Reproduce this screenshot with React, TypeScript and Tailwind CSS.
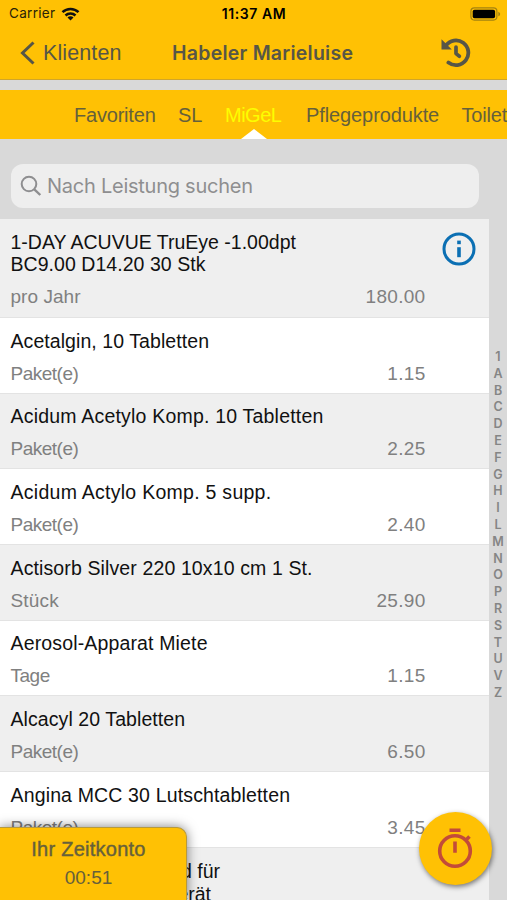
type Item = { lines: { text: string; spacing: string }[]; unit: string; unitSpacing: string; price: string; info?: boolean; height: string };

const items: Item[] = [
  {
    lines: [
      { text: '1-DAY ACUVUE TruEye -1.00dpt', spacing: 'tracking-[0px]' },
      { text: 'BC9.00 D14.20 30 Stk', spacing: 'tracking-[0.05px]' },
    ],
    unit: 'pro Jahr', unitSpacing: 'tracking-[0.05px]', price: '180.00', info: true, height: 'h-[99px]',
  },
  { lines: [{ text: 'Acetalgin, 10 Tabletten', spacing: 'tracking-[0.07px]' }], unit: 'Paket(e)', unitSpacing: 'tracking-[-0.5px]', price: '1.15', height: 'h-[75.7px]' },
  { lines: [{ text: 'Acidum Acetylo Komp. 10 Tabletten', spacing: 'tracking-[0.2px]' }], unit: 'Paket(e)', unitSpacing: 'tracking-[-0.5px]', price: '2.25', height: 'h-[75.7px]' },
  { lines: [{ text: 'Acidum Actylo Komp. 5 supp.', spacing: 'tracking-[0.27px]' }], unit: 'Paket(e)', unitSpacing: 'tracking-[-0.5px]', price: '2.40', height: 'h-[75.7px]' },
  { lines: [{ text: 'Actisorb Silver 220 10x10 cm 1 St.', spacing: 'tracking-[0.12px]' }], unit: 'Stück', unitSpacing: 'tracking-[0.2px]', price: '25.90', height: 'h-[75.7px]' },
  { lines: [{ text: 'Aerosol-Apparat Miete', spacing: 'tracking-[0.15px]' }], unit: 'Tage', unitSpacing: 'tracking-[-0.5px]', price: '1.15', height: 'h-[75.7px]' },
  { lines: [{ text: 'Alcacyl 20 Tabletten', spacing: 'tracking-[0.08px]' }], unit: 'Paket(e)', unitSpacing: 'tracking-[-0.5px]', price: '6.50', height: 'h-[75.7px]' },
  { lines: [{ text: 'Angina MCC 30 Lutschtabletten', spacing: 'tracking-[0.15px]' }], unit: 'Paket(e)', unitSpacing: 'tracking-[-0.5px]', price: '3.45', height: 'h-[75.7px]' },
];

const letters = '1ABCDEFGHILMNOPRSTUVZ'.split('');

function StatusBar() {
  return (
    <div className="grid h-[27px] grid-cols-3 items-center pr-[6px] pl-[9px] font-['Inter',sans-serif] text-[13.5px] text-[#2a2208]">
      <div className="flex items-center gap-[6px]">
        <span className="tracking-[0.3px]">Carrier</span>
        <svg width="19" height="14" viewBox="0 0 18 14" fill="none" stroke="#111" strokeWidth="2.5">
          <path d="M1 5.2a11.4 11.4 0 0 1 16 0" />
          <path d="M4 8.5a7.2 7.2 0 0 1 10 0" />
          <path d="M9 13.5 6 10.6a4.2 4.2 0 0 1 6 0Z" fill="#111" stroke="none" />
        </svg>
      </div>
      <span className="-ml-[2px] text-center text-[14px] font-semibold tracking-[0.55px] text-black">11:37 AM</span>
      <svg className="justify-self-end" width="31" height="14" viewBox="0 0 31 14">
        <rect x="0.9" y="0.9" width="26" height="12.2" rx="3.5" fill="none" stroke="#a48210" strokeWidth="1.2" />
        <rect x="2.7" y="2.7" width="22.4" height="8.6" rx="1.8" fill="#000" />
        <path d="M28.3 4.7c2.4.8 2.4 3.8 0 4.6Z" fill="#a48210" />
      </svg>
    </div>
  );
}

function NavBar() {
  return (
    <div className="flex h-[53px] items-center border-b border-[#d0a52b] pb-px text-[#575647]">
      <div className="flex w-[172px] items-center pl-[20px]">
        <svg width="16" height="24" viewBox="0 0 16 24" fill="none" stroke="currentColor" strokeWidth="3">
          <path d="M13.5 1.5 2.5 12l11 10.5" />
        </svg>
        <span className="ml-[7px] text-[21.5px] leading-6 tracking-[0.1px]">Klienten</span>
      </div>
      <h1 className="flex-1 font-['Inter',sans-serif] text-[19.5px] leading-6 font-semibold tracking-[0.24px] whitespace-nowrap">Habeler Marieluise</h1>
      <svg className="mr-[36px]" width="30" height="30" viewBox="0 0 30 30" fill="none" stroke="currentColor">
        <path d="M4.8 7.6A12.4 12.4 0 1 1 7.4 24.6" strokeWidth="3.8" strokeLinecap="round" />
        <path d="M.5 1.2v10.3h10.3Z" fill="currentColor" stroke="none" />
        <path d="M15 9v6.6l3.4 2.6" strokeWidth="3.7" strokeLinecap="round" strokeLinejoin="round" />
      </svg>
    </div>
  );
}

function Tabs() {
  return (
    <div className="mt-[10px] flex h-[49px] items-center overflow-hidden bg-[#ffc104] pl-[74px] text-[20px] tracking-[-0.2px] whitespace-nowrap text-[#66603b]">
      <span className="w-[104px] shrink-0">Favoriten</span>
      <span className="w-[47px] shrink-0">SL</span>
      <span className="relative flex h-full w-[81px] shrink-0 items-center tracking-[-0.5px] text-[#fdfd00]">
        MiGeL
        <svg className="absolute bottom-0 left-[16px]" width="26" height="10" viewBox="0 0 26 10">
          <path d="M13 0 26 10H0Z" fill="#fff" />
        </svg>
      </span>
      <span className="w-[155.5px] shrink-0 tracking-[-0.1px]">Pflegeprodukte</span>
      <span className="shrink-0">Toilet</span>
    </div>
  );
}

function Row({ item, index }: { item: Item; index: number }) {
  return (
    <div className={`flex shrink-0 flex-col border-b border-[#e3e3e3] px-[10.5px] pt-[11.7px] ${item.height} ${index % 2 ? 'bg-white' : 'bg-[#efefef]'}`}>
      <div className="flex justify-between">
        <div className="text-[19.5px] leading-[22.7px] whitespace-nowrap text-[#111]">
          {item.lines.map((l) => (
            <div key={l.text} className={l.spacing}>{l.text}</div>
          ))}
        </div>
        {item.info && (
          <svg className="mt-[1.3px] mr-[2.5px] -mb-1" width="34" height="34" viewBox="0 0 34 34" fill="none" stroke="#0b6fb3">
            <circle cx="17" cy="17" r="15" strokeWidth="3" />
            <path d="M17 15.2v10" strokeWidth="3.6" />
            <path d="M17 8.6v3.6" strokeWidth="3.6" />
          </svg>
        )}
      </div>
      <div className="mt-[10.3px] flex justify-between pr-[53px] text-[19px] leading-[22px] text-[#808080]">
        <span className={item.unitSpacing}>{item.unit}</span>
        <span className="tracking-[0.3px]">{item.price}</span>
      </div>
    </div>
  );
}

export default function App() {
  return (
    <div className="relative flex h-[900px] w-[507px] flex-col overflow-hidden bg-[#d9d9d9] font-['Liberation_Sans',Arial,sans-serif]">
      <header className="bg-[#ffc104]">
        <StatusBar />
        <NavBar />
      </header>
      <Tabs />
      <div className="h-[80px] shrink-0 pt-[25px] pr-[28px] pl-[10.5px]">
        <div className="flex h-[44px] items-center rounded-[12px] bg-[#eee] pl-[9px] text-[#8e8e90]">
          <svg width="22" height="22" viewBox="0 0 22 22" fill="none" stroke="currentColor" strokeWidth="2">
            <circle cx="9" cy="9" r="7.3" />
            <path d="m14.3 14.3 6 5.7" strokeWidth="2.4" />
          </svg>
          <span className="ml-[5.5px] font-['Inter',sans-serif] text-[20px] tracking-[-0.25px]">Nach Leistung suchen</span>
        </div>
      </div>
      <main className="flex min-h-0 flex-1">
        <div className="flex w-[489px] flex-col overflow-hidden">
          {items.map((item, i) => (
            <Row key={i} item={item} index={i} />
          ))}
          <div className="h-[99px] shrink-0 bg-[#efefef] pt-[12px] text-[19.5px] leading-[22.7px] text-[#111]">
            <div className="w-[220px] text-right">d für</div>
            <div className="w-[211px] text-right">erät</div>
          </div>
        </div>
        <nav className="flex w-[18px] flex-col items-center pt-[130px] font-['Inter',sans-serif] text-[12.5px] leading-[16.8px] font-semibold text-[#858585]">
          {letters.map((l) => (
            <span key={l}>{l}</span>
          ))}
        </nav>
      </main>
      <div className="absolute bottom-0 left-0 flex h-[73px] w-[187px] flex-col items-center rounded-tr-[10px] border-t border-r border-[#b79a3c] bg-[#ffc104] pt-[9px] pr-[9px] text-[19px] text-[#66603b] shadow-[0_0_12px_rgba(0,0,0,0.5)]">
        <span className="text-[20px] leading-[24px] font-medium tracking-[0.25px] [-webkit-text-stroke:0.4px_#66603b]">Ihr Zeitkonto</span>
        <span className="mt-[3.5px] leading-[25px]">00:51</span>
      </div>
      <button className="absolute top-[812px] left-[419px] flex size-[73px] items-center justify-center rounded-full bg-[#ffc104] pr-[1px] pb-[2px] shadow-[1px_2px_5px_rgba(0,0,0,0.5)]">
        <svg width="36" height="42" viewBox="0 0 36 42" fill="none" stroke="#c34b39" strokeWidth="3.6">
          <circle cx="18" cy="24" r="15.3" />
          <path d="M12.5 3.2h11M18 14.5v11.2M28 14l4.5-4.5" />
        </svg>
      </button>
    </div>
  );
}
